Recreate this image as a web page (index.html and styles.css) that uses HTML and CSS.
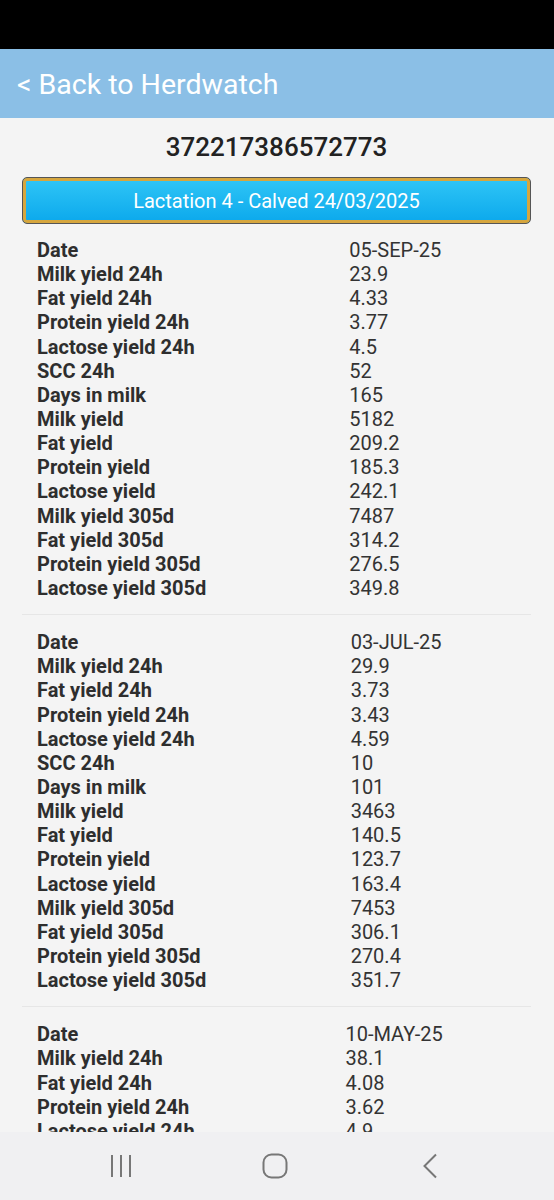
FILE: index.html
```html
<!DOCTYPE html>
<html>
<head>
  <meta charset="UTF-8">
  <meta name="viewport" content="width=device-width, initial-scale=1.0">
  <link rel="stylesheet" href="styles.css">
</head>
<body>

  <div class="status-bar"></div>

  <div class="app">
    <div class="top-bar">
      <a class="back-link" href="#">&lt; Back to Herdwatch</a>
    </div>

    <div class="page">
      <h2 class="tag-number">372217386572773</h2>

      <button class="lactation-button">Lactation 4 - Calved 24/03/2025</button>

      <div class="record">
        <table class="record-table">
          <tr><th>Date</th><td>05-SEP-25</td></tr>
          <tr><th>Milk yield 24h</th><td>23.9</td></tr>
          <tr><th>Fat yield 24h</th><td>4.33</td></tr>
          <tr><th>Protein yield 24h</th><td>3.77</td></tr>
          <tr><th>Lactose yield 24h</th><td>4.5</td></tr>
          <tr><th>SCC 24h</th><td>52</td></tr>
          <tr><th>Days in milk</th><td>165</td></tr>
          <tr><th>Milk yield</th><td>5182</td></tr>
          <tr><th>Fat yield</th><td>209.2</td></tr>
          <tr><th>Protein yield</th><td>185.3</td></tr>
          <tr><th>Lactose yield</th><td>242.1</td></tr>
          <tr><th>Milk yield 305d</th><td>7487</td></tr>
          <tr><th>Fat yield 305d</th><td>314.2</td></tr>
          <tr><th>Protein yield 305d</th><td>276.5</td></tr>
          <tr><th>Lactose yield 305d</th><td>349.8</td></tr>
        </table>
      </div>

      <div class="record">
        <table class="record-table">
          <tr><th>Date</th><td>03-JUL-25</td></tr>
          <tr><th>Milk yield 24h</th><td>29.9</td></tr>
          <tr><th>Fat yield 24h</th><td>3.73</td></tr>
          <tr><th>Protein yield 24h</th><td>3.43</td></tr>
          <tr><th>Lactose yield 24h</th><td>4.59</td></tr>
          <tr><th>SCC 24h</th><td>10</td></tr>
          <tr><th>Days in milk</th><td>101</td></tr>
          <tr><th>Milk yield</th><td>3463</td></tr>
          <tr><th>Fat yield</th><td>140.5</td></tr>
          <tr><th>Protein yield</th><td>123.7</td></tr>
          <tr><th>Lactose yield</th><td>163.4</td></tr>
          <tr><th>Milk yield 305d</th><td>7453</td></tr>
          <tr><th>Fat yield 305d</th><td>306.1</td></tr>
          <tr><th>Protein yield 305d</th><td>270.4</td></tr>
          <tr><th>Lactose yield 305d</th><td>351.7</td></tr>
        </table>
      </div>

      <div class="record">
        <table class="record-table record-table--short">
          <tr><th>Date</th><td>10-MAY-25</td></tr>
          <tr><th>Milk yield 24h</th><td>38.1</td></tr>
          <tr><th>Fat yield 24h</th><td>4.08</td></tr>
          <tr><th>Protein yield 24h</th><td>3.62</td></tr>
          <tr><th>Lactose yield 24h</th><td>4.9</td></tr>
        </table>
      </div>
    </div>
  </div>

  <div class="nav-bar">
    <svg class="nav-icon" width="24" height="26" viewBox="0 0 24 26">
      <path d="M3 2v22M12 2v22M21 2v22" stroke="#777" stroke-width="2" fill="none"/>
    </svg>
    <svg class="nav-icon" width="26" height="26" viewBox="0 0 26 26">
      <rect x="1.5" y="1.5" width="23" height="23" rx="8" stroke="#777" stroke-width="2" fill="none"/>
    </svg>
    <svg class="nav-icon" width="16" height="26" viewBox="0 0 16 26">
      <path d="M14 1.5L2.5 13L14 24.5" stroke="#777" stroke-width="2" fill="none"/>
    </svg>
  </div>

</body>
</html>
```

FILE: styles.css
```css
body {
    font-family: Roboto, "Liberation Sans", Arial, sans-serif;
    margin: 0px;
    height: 1200px;
    display: flex;
    flex-direction: column;
    background: #f4f4f4;
    color: #333;
    overflow: hidden;
}

.status-bar {
    height: 49px;
    flex: none;
    background: #000;
}

.app {
    flex: 1;
    min-height: 0;
    overflow: hidden;
}

.top-bar {
    height: 69px;
    background: #8bbfe6;
    display: flex;
    align-items: center;
    padding-left: 17px;
}

.back-link {
    color: #fff;
    font-size: 28.5px;
    text-decoration: none;
    padding-top: 2px;
}

.page {
    padding: 0 23px 0 22px;
}

.tag-number {
    margin: 0;
    padding-top: 14px;
    height: 45px;
    text-align: center;
    font-size: 26px;
    font-weight: 500;
    color: #222;
    line-height: 30px;
}

.lactation-button {
    display: block;
    width: 100%;
    height: 47px;
    margin: 0;
    border: 1px solid #555;
    border-radius: 5px;
    box-shadow: inset 0 0 0 3px #d6a63e;
    background: linear-gradient(#30c6f6, #0ba8ec);
    color: #fff;
    font-family: Roboto, "Liberation Sans", Arial, sans-serif;
    font-size: 20px;
    padding: 0;
}

.record {
    padding: 14px 12px 14px 15px;
    border-bottom: 1px solid #e6e6e6;
}

.record:last-child {
    border-bottom: 0;
}

.record + .record {
    padding-top: 15px;
}

.record-table {
    width: 100%;
    border-collapse: collapse;
}

.record-table th,
.record-table td {
    padding: 0;
    height: 24.15px;
    line-height: 24px;
    font-size: 20px;
    text-align: left;
    white-space: nowrap;
}

.record-table th {
    font-weight: 700;
    color: #2e2e2e;
}

.record-table--short th {
    width: 64%;
}

.record-table td {
    font-weight: 400;
    color: #333;
}

.nav-bar {
    height: 68px;
    flex: none;
    background: #f0f0f2;
    display: flex;
    align-items: center;
}

.nav-icon:nth-child(1) {
    margin-left: 109px;
}

.nav-icon:nth-child(2) {
    margin-left: 129px;
}

.nav-icon:nth-child(3) {
    margin-left: 134px;
}
```
